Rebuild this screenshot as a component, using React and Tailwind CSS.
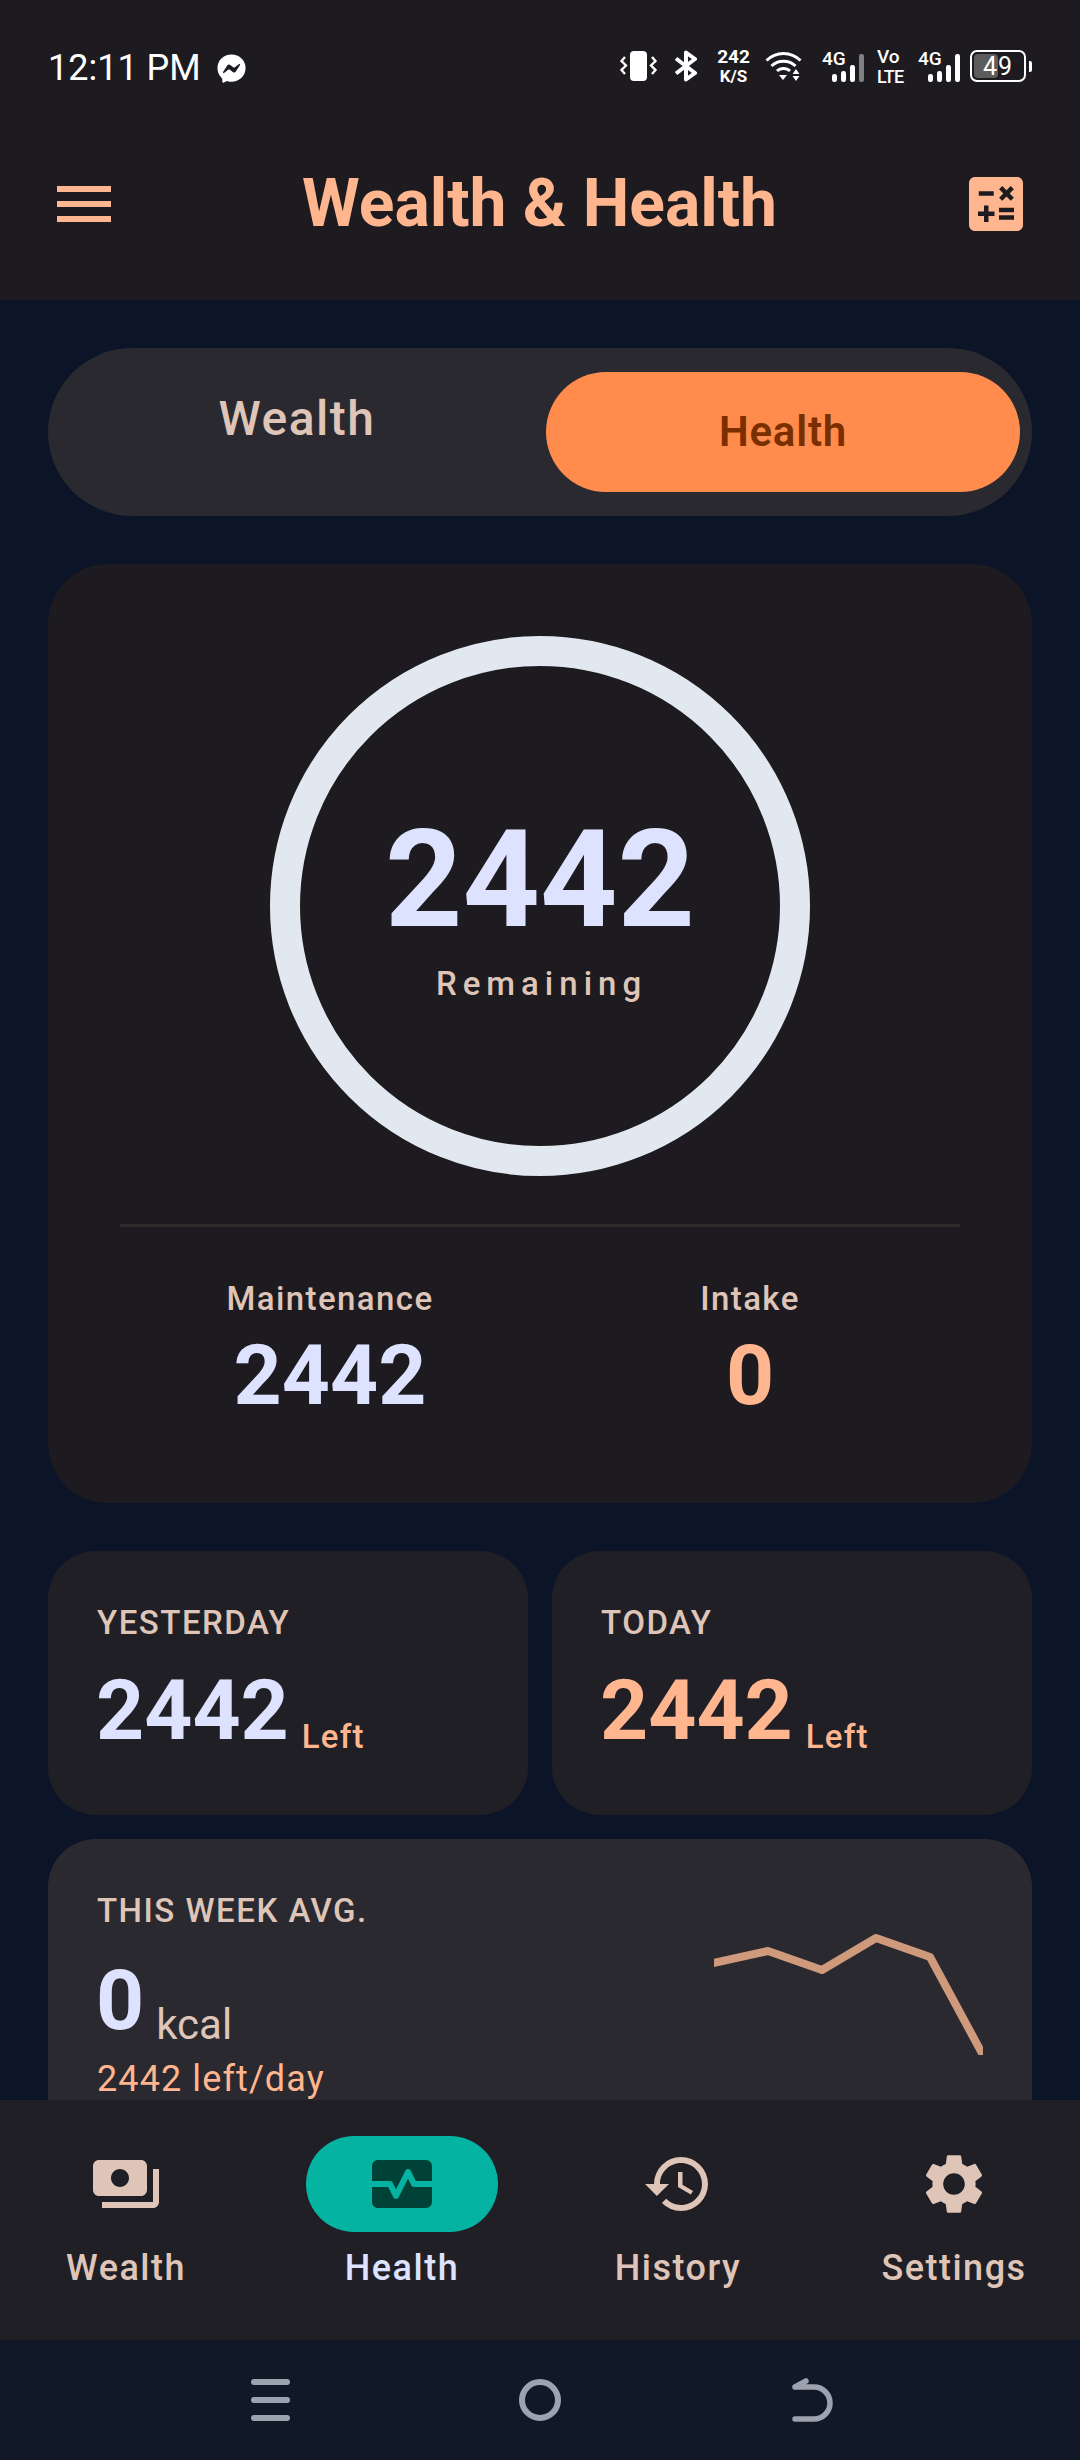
import React from "react";
import { FaFacebookMessenger } from "react-icons/fa";
import { MdCalculate, MdPayments, MdMonitorHeart, MdHistory, MdSettings } from "react-icons/md";

function Bars({ dim }) {
  return (
    <div className="relative w-[42px] h-[32px]">
      <span className="absolute left-0 top-0 text-[19px] leading-[17px] font-medium text-white">4G</span>
      <svg width="42" height="32" viewBox="0 0 42 32" className="absolute left-0 top-0">
        <rect x="10" y="24" width="5" height="8" rx="2.2" fill="#fff" />
        <rect x="19" y="21" width="5" height="11" rx="2.2" fill="#fff" />
        <rect x="28" y="15" width="5" height="17" rx="2.2" fill="#fff" />
        <rect x="37" y="4" width="5" height="28" rx="2.2" fill={dim ? "#808080" : "#fff"} />
      </svg>
    </div>
  );
}

function StatusBar() {
  return (
    <div className="h-[100px] pl-[48px] pr-[48px] pt-[50px] flex items-start justify-between text-white">
      <div className="flex items-center h-[36px]">
        <span className="text-[36px] leading-[36px] font-normal">12:11 PM</span>
        <FaFacebookMessenger className="ml-[16px] w-[29px] h-[29px]" />
      </div>
      <div className="flex items-center h-[36px] -mt-[2px]">
        <svg width="37" height="30" viewBox="0 0 37 30" fill="none">
          <rect x="10" y="0" width="17" height="30" rx="4" fill="#fff" />
          <path d="M5 6 L1.5 10 L6 14.5 L1.5 19 L5 23" stroke="#fff" strokeWidth="2.4" />
          <path d="M32 6 L35.5 10 L31 14.5 L35.5 19 L32 23" stroke="#fff" strokeWidth="2.4" />
        </svg>
        <svg className="ml-[17px]" width="24" height="32" viewBox="0 0 24 32" fill="none">
          <path d="M2 8.5 L21 23 L12 29.5 V2.5 L21 9 L2 23.5" stroke="#fff" strokeWidth="4" strokeLinejoin="round" />
        </svg>
        <div className="ml-[19px] w-[33px] flex flex-col items-center font-bold">
          <span className="text-[19px] leading-[18px]">242</span>
          <span className="text-[17px] leading-[15px] mt-[3px]">K/S</span>
        </div>
        <svg className="ml-[15px]" width="37" height="30" viewBox="0 0 37 30" fill="none">
          <path d="M1.5 9.5 C11 0 26 0 35.5 9.5" stroke="#fff" strokeWidth="3" />
          <path d="M6.5 15 C13 8.5 24 8.5 30.5 15" stroke="#fff" strokeWidth="3" />
          <path d="M12 20 C15.5 16.5 21.5 16.5 25 20" stroke="#fff" strokeWidth="3" />
          <path d="M14 24 H22 L18 29 Z" fill="#fff" />
          <path d="M31 18 L34.5 23 H27.5 Z M27.5 25 H34.5 L31 30 Z" fill="#fff" />
        </svg>
        <div className="ml-[20px]"><Bars dim /></div>
        <div className="ml-[13px] w-[28px] flex flex-col font-medium">
          <span className="text-[19px] leading-[22px]">Vo</span>
          <span className="text-[18px] leading-[21px] -mt-[2px] tracking-[-0.8px]">LTE</span>
        </div>
        <div className="ml-[13px]"><Bars /></div>
        <div className="relative ml-[10px] w-[56px] h-[32px] rounded-[7px] border-[2px] border-white flex items-center justify-center">
          <div className="absolute left-[2px] top-[2px] bottom-[2px] w-[24px] rounded-[4px] bg-[#5c5c5c]" />
          <span className="relative text-[25px] leading-[25px] tracking-[1px]">49</span>
        </div>
        <div className="ml-[3px] w-[3px] h-[11px] rounded-r-[2px] bg-white" />
      </div>
    </div>
  );
}

function Toolbar() {
  return (
    <div className="h-[200px] pt-[8px] px-[48px] flex items-center justify-between">
      <div className="ml-[9px] flex flex-col gap-[9px] w-[54px]">
        <div className="h-[6px] bg-[#ffb68f]" />
        <div className="h-[6px] bg-[#ffb68f]" />
        <div className="h-[6px] bg-[#ffb68f]" />
      </div>
      <h1 className="ml-[8px] text-[66px] leading-[78px] font-bold text-[#ffb68f]">Wealth &amp; Health</h1>
      <MdCalculate className="-my-[9px] w-[72px] h-[72px] text-[#ffb68f]" />
    </div>
  );
}

function Toggle() {
  return (
    <div className="h-[168px] rounded-[84px] bg-[#2b2930] p-[12px] flex gap-[12px] items-center">
      <div className="flex-1 flex justify-center pb-[26px] text-[48px] leading-[60px] font-medium text-[#dfc5b8] tracking-[1.5px]">Wealth</div>
      <div className="w-[474px] h-[120px] rounded-[60px] bg-[#ff8b4d] flex items-center justify-center text-[42px] leading-[54px] font-semibold tracking-[0.8px] text-[#7a2f00]">Health</div>
    </div>
  );
}

function Stat({ label, value, color }) {
  return (
    <div className="flex flex-col items-center">
      <span className="text-[33px] leading-[45px] font-medium tracking-[1.4px] text-[#dfc5b8] mt-[1px]">{label}</span>
      <span className={`text-[84px] leading-[90px] font-bold mt-[10px] ${color}`}>{value}</span>
    </div>
  );
}

function MainCard() {
  return (
    <div className="mt-[48px] h-[939px] rounded-[60px] bg-[#1d1b1f] pt-[72px] px-[72px]">
      <div className="mx-auto w-[540px] h-[540px] rounded-full border-[30px] border-[#e2e8f0] flex flex-col items-center justify-center">
        <span className="text-[135px] leading-[150px] font-bold text-[#dde3ff] -mt-[2px]">2442</span>
        <span className="text-[33px] leading-[42px] font-medium tracking-[6px] text-[#dfc5b8] mt-[8px] ml-[3px]">Remaining</span>
      </div>
      <div className="mt-[48px] h-[3px] bg-[#2f2a2a]" />
      <div className="mt-[48px] grid grid-cols-2">
        <Stat label="Maintenance" value="2442" color="text-[#dde3ff]" />
        <Stat label="Intake" value="0" color="text-[#ffb68f]" />
      </div>
    </div>
  );
}

function DayCard({ label, color }) {
  return (
    <div className="h-[264px] rounded-[48px] bg-[#211f26] pt-[49px] px-[48px]">
      <div className="text-[33px] leading-[45px] font-medium tracking-[1.5px] text-[#dfc5b8] ml-[1px]">{label}</div>
      <div className="mt-[21px] flex items-end">
        <span className={`text-[84px] leading-[90px] font-bold ${color}`}>2442</span>
        <span className="ml-[13px] text-[33px] leading-[42px] font-medium tracking-[1.2px] text-[#ffb68f] translate-y-[2px]">Left</span>
      </div>
    </div>
  );
}

function WeekCard() {
  return (
    <div className="mt-[24px] h-[360px] rounded-[48px] bg-[#2b2930] pt-[49px] pl-[48px] flex justify-between">
      <div>
        <div className="text-[33px] leading-[45px] font-medium tracking-[1.5px] text-[#dfc5b8] ml-[1px]">THIS WEEK AVG.</div>
        <div className="mt-[23px] flex items-end">
          <span className="text-[84px] leading-[90px] font-bold text-[#dde3ff]">0</span>
          <span className="ml-[12px] text-[42px] leading-[54px] text-[#dfc5b8] translate-y-[6px]">kcal</span>
        </div>
        <div className="mt-[9px] ml-[1px] text-[36px] leading-[48px] tracking-[1.1px] text-[#ffb68f]">2442 left/day</div>
      </div>
      <svg className="mt-[42px] mr-[49px]" width="269" height="125" viewBox="714 1930 269 125" fill="none">
        <polyline points="700,1966 768,1951 822,1970 876,1938 930,1957 990,2068" stroke="#cf9a7b" strokeWidth="8" strokeLinejoin="round" />
      </svg>
    </div>
  );
}

function NavItem({ icon: Icon, label, active }) {
  return (
    <div className="w-[252px] flex flex-col items-center">
      <div className={`w-[192px] h-[96px] rounded-[48px] flex items-center justify-center ${active ? "bg-[#05b3a2]" : ""}`}>
        <Icon className={`w-[72px] h-[72px] ${active ? "text-[#004237]" : "text-[#dfc5b8]"}`} />
      </div>
      <span className={`mt-[12px] text-[36px] leading-[48px] font-medium tracking-[1.5px] ${active ? "text-[#dde3ff]" : "text-[#dfc5b8]"}`}>{label}</span>
    </div>
  );
}

function SystemBar() {
  return (
    <div className="h-[120px] bg-[#111827] relative flex items-center">
      <div className="ml-[251px] w-[39px] flex flex-col gap-[12px]">
        <div className="h-[6px] rounded-full bg-[#9ca3af]" />
        <div className="h-[6px] rounded-full bg-[#9ca3af]" />
        <div className="h-[6px] rounded-full bg-[#9ca3af]" />
      </div>
      <div className="ml-[229px] w-[42px] h-[42px] rounded-full border-[6px] border-[#9ca3af]" />
      <svg className="ml-[231px]" width="42" height="46" viewBox="0 0 42 46" fill="none">
        <path d="M3 10 L14 4 M3 10 H22 A16 16 0 0 1 22 42 H3" stroke="#9ca3af" strokeWidth="5.5" strokeLinecap="round" />
      </svg>
    </div>
  );
}

export default function App() {
  return (
    <div className="w-[1080px] h-[2460px] flex flex-col overflow-hidden bg-[#0b1527] font-['Roboto',sans-serif]">
      <div className="h-[300px] shrink-0 bg-[#1d1b1f]">
        <StatusBar />
        <Toolbar />
      </div>
      <main className="flex-1 min-h-0 overflow-hidden px-[48px] pt-[48px]">
        <Toggle />
        <MainCard />
        <div className="mt-[48px] grid grid-cols-2 gap-[24px]">
          <DayCard label="YESTERDAY" color="text-[#dde3ff]" />
          <DayCard label="TODAY" color="text-[#ffb68f]" />
        </div>
        <WeekCard />
      </main>
      <nav className="h-[240px] shrink-0 bg-[#211f26] pt-[36px] flex gap-[24px]">
        <NavItem icon={MdPayments} label="Wealth" />
        <NavItem icon={MdMonitorHeart} label="Health" active />
        <NavItem icon={MdHistory} label="History" />
        <NavItem icon={MdSettings} label="Settings" />
      </nav>
      <SystemBar />
    </div>
  );
}
